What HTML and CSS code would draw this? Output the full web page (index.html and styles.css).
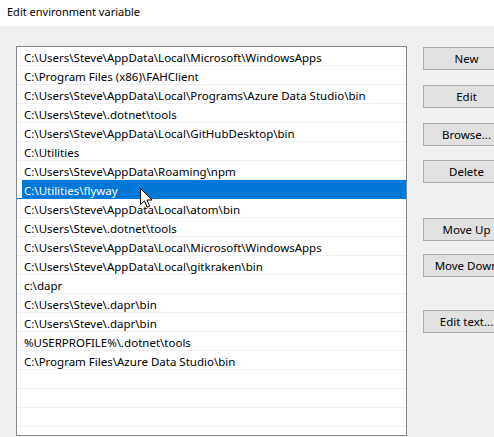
FILE: index.html
```html
<!DOCTYPE html>
<html>
<head>
<meta charset="utf-8">
<link rel="stylesheet" href="styles.css">
</head>
<body>
<div class="window">
  <div class="titlebar">Edit environment variable</div>
  <div class="content">
    <div class="list">
      <div class="row"><span class="cell">C:\Users\Steve\AppData\Local\Microsoft\WindowsApps</span></div>
      <div class="row"><span class="cell">C:\Program Files (x86)\FAHClient</span></div>
      <div class="row"><span class="cell">C:\Users\Steve\AppData\Local\Programs\Azure Data Studio\bin</span></div>
      <div class="row"><span class="cell">C:\Users\Steve\.dotnet\tools</span></div>
      <div class="row"><span class="cell">C:\Users\Steve\AppData\Local\GitHubDesktop\bin</span></div>
      <div class="row"><span class="cell">C:\Utilities</span></div>
      <div class="row"><span class="cell">C:\Users\Steve\AppData\Roaming\npm</span></div>
      <div class="row selected"><span class="cell">C:\Utilities\flyway</span></div>
      <div class="row"><span class="cell">C:\Users\Steve\AppData\Local\atom\bin</span></div>
      <div class="row"><span class="cell">C:\Users\Steve\.dotnet\tools</span></div>
      <div class="row"><span class="cell">C:\Users\Steve\AppData\Local\Microsoft\WindowsApps</span></div>
      <div class="row"><span class="cell">C:\Users\Steve\AppData\Local\gitkraken\bin</span></div>
      <div class="row"><span class="cell">c:\dapr</span></div>
      <div class="row"><span class="cell">C:\Users\Steve\.dapr\bin</span></div>
      <div class="row"><span class="cell">C:\Users\Steve\.dapr\bin</span></div>
      <div class="row"><span class="cell">%USERPROFILE%\.dotnet\tools</span></div>
      <div class="row"><span class="cell">C:\Program Files\Azure Data Studio\bin</span></div>
      <div class="row"><span class="cell"></span></div>
      <div class="row"><span class="cell"></span></div>
      <div class="row"><span class="cell"></span></div>
      <div class="row"><span class="cell"></span></div>
    </div>
    <div class="buttons">
      <div class="btn btn-new">New</div>
      <div class="btn btn-edit">Edit</div>
      <div class="btn btn-browse">Browse...</div>
      <div class="btn btn-delete">Delete</div>
      <div class="btn btn-up">Move Up</div>
      <div class="btn btn-down">Move Down</div>
      <div class="btn btn-text">Edit text...</div>
    </div>
  </div>
  <svg class="cursor" width="13" height="21" viewBox="0 0 13 21">
    <path d="M0.5 0.5 L0.5 16.5 L4.5 12.8 L7.2 19.2 L9.6 18.2 L7 12 L12 12 Z" fill="#ffffff" stroke="#000000" stroke-width="1" stroke-linejoin="miter"/>
  </svg>
</div>
</body>
</html>
```

FILE: styles.css
```css
html, body {
  margin: 0;
  padding: 0;
}
body {
  width: 494px;
  height: 437px;
  overflow: hidden;
  background: #f0f0f0;
  font-family: "Noto Sans", "Open Sans", sans-serif;
  font-size: 11.5px;
  color: #000;
}
.window {
  position: relative;
  width: 494px;
  height: 437px;
  overflow: hidden;
}
.titlebar {
  height: 26px;
  background: #ffffff;
  padding-left: 7px;
  font-size: 11px;
  line-height: 24px;
  white-space: nowrap;
}
.content {
  display: flex;
  padding: 20px 0 0 16px;
}
.list {
  box-sizing: border-box;
  width: 391px;
  height: 390px;
  border: 1px solid #828790;
  background: #ffffff;
  overflow: hidden;
  flex: none;
}
.row {
  box-sizing: border-box;
  height: 19px;
  border-bottom: 1px solid #f0f0f0;
  padding-left: 5px;
  display: flex;
}
.cell {
  flex: 1;
  padding-left: 2px;
  line-height: 18px;
  padding-top: 1.5px;
  height: 18px;
  box-sizing: border-box;
  white-space: nowrap;
}
.row.selected .cell {
  background: #0078d7;
  color: #ffffff;
  height: 19px;
}
.row.selected {
  border-bottom-color: #0078d7;
}
.buttons {
  display: flex;
  flex-direction: column;
  margin-left: 16px;
  padding-top: 1px;
  flex: none;
}
.btn {
  box-sizing: border-box;
  width: 87px;
  height: 23px;
  background: #e1e1e1;
  border: 1px solid #adadad;
  display: flex;
  align-items: center;
  justify-content: center;
  white-space: nowrap;
  flex: none;
}
.btn-edit { margin-top: 15px; }
.btn-browse { margin-top: 15px; }
.btn-delete { margin-top: 14px; }
.btn-up { margin-top: 35px; }
.btn-down { margin-top: 13px; }
.btn-text { margin-top: 33px; }
.cursor {
  position: absolute;
  left: 140px;
  top: 188px;
}
```
